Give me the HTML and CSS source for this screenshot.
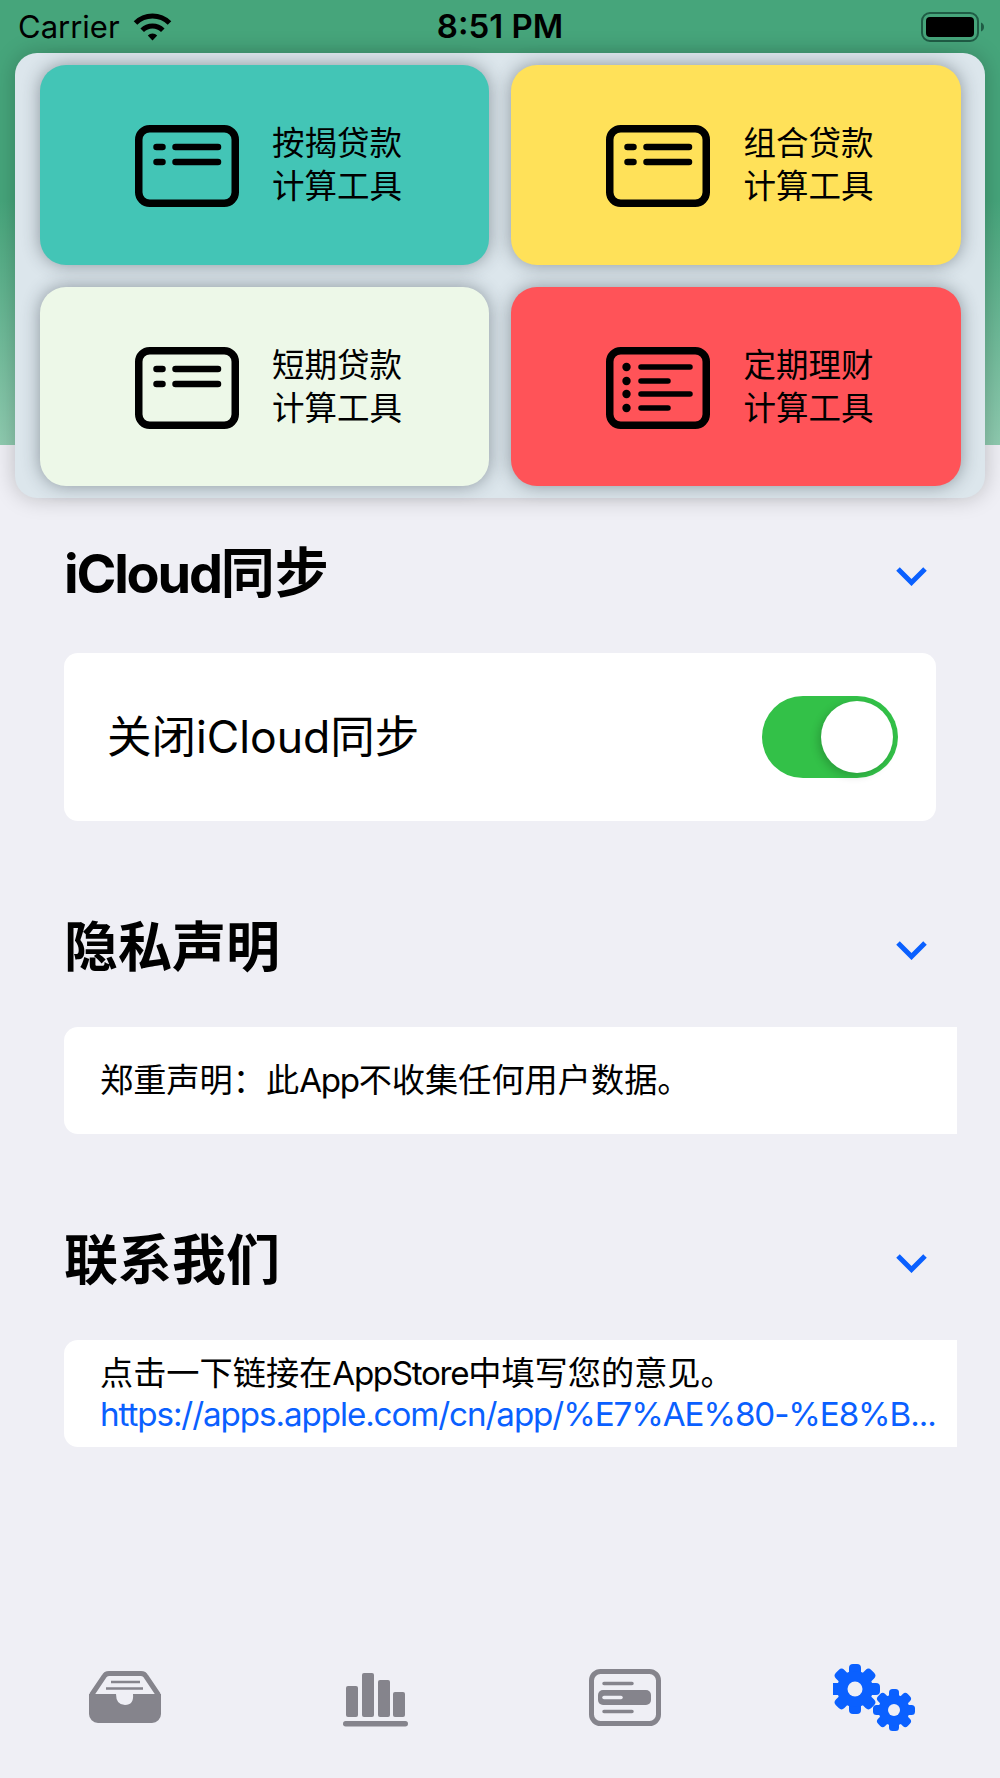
FILE: index.html
```html
<!DOCTYPE html>
<html lang="zh">
<head>
<meta charset="utf-8">
<title>Settings</title>
<link rel="stylesheet" href="styles.css">
</head>
<body>
<div class="page">
  <header class="hero">
    <div class="status">
      <div class="status-left">
        <span class="carrier">Carrier</span>
        <svg class="wifi" viewBox="0 0 39 28"><path d="M19.5 27.5 14.8 22.4a6.6 6.6 0 0 1 9.4 0Z" fill="#000"/><path d="M9.2 17.2a14.5 14.5 0 0 1 20.6 0" fill="none" stroke="#000" stroke-width="5"/><path d="M2.5 10a24 24 0 0 1 34 0" fill="none" stroke="#000" stroke-width="5"/></svg>
      </div>
      <span class="time">8:51 PM</span>
      <svg class="battery" viewBox="0 0 64 30"><rect x="1" y="1" width="56" height="28" rx="8" fill="none" stroke="#1f5c45" stroke-width="2"/><rect x="5" y="5" width="48" height="20" rx="4" fill="#000"/><path d="M60 10.5c2 .6 3 2.300 3 4.500s-1 3.900-3 4.500Z" fill="#1f5c45"/></svg>
    </div>
    <div class="panel">
      <a class="tile tile-teal">
        <svg class="tile-icon" viewBox="0 0 104 82"><rect x="3.750" y="3.750" width="96.500" height="74.500" rx="11" class="ic-frame"/><path d="M21.500 22h6M40.500 22h42.500M21.500 37h6M40.500 37h42.500" class="ic-line"/></svg>
        <span class="tile-text">按揭贷款<br>计算工具</span>
      </a>
      <a class="tile tile-yellow">
        <svg class="tile-icon" viewBox="0 0 104 82"><rect x="3.750" y="3.750" width="96.500" height="74.500" rx="11" class="ic-frame"/><path d="M21.500 22h6M40.500 22h42.500M21.500 37h6M40.500 37h42.500" class="ic-line"/></svg>
        <span class="tile-text">组合贷款<br>计算工具</span>
      </a>
      <a class="tile tile-pale">
        <svg class="tile-icon" viewBox="0 0 104 82"><rect x="3.750" y="3.750" width="96.500" height="74.500" rx="11" class="ic-frame"/><path d="M21.500 22h6M40.500 22h42.500M21.500 37h6M40.500 37h42.500" class="ic-line"/></svg>
        <span class="tile-text">短期贷款<br>计算工具</span>
      </a>
      <a class="tile tile-red">
        <svg class="tile-icon" viewBox="0 0 104 82"><rect x="3.750" y="3.750" width="96.500" height="74.500" rx="11" class="ic-frame"/><path d="M35 20h49M35 34h27M35 47h49M35 61h27" class="ic-line ic-line-thin"/><circle cx="20.500" cy="20" r="4.200"/><circle cx="20.500" cy="34" r="4.200"/><circle cx="20.500" cy="47" r="4.200"/><circle cx="20.500" cy="61" r="4.200"/></svg>
        <span class="tile-text">定期理财<br>计算工具</span>
      </a>
    </div>
  </header>

  <main class="sections">
    <section class="section">
      <div class="section-head">
        <h2 class="section-title"><span class="latin-tight">iCloud</span>同步</h2>
        <svg class="chevron" viewBox="0 0 33 20"><path d="M3 3l13.500 13.500L30 3"/></svg>
      </div>
      <div class="card card-row">
        <span class="row-label">关闭iCloud同步</span>
        <div class="switch"><span class="thumb"></span></div>
      </div>
    </section>

    <section class="section">
      <div class="section-head">
        <h2 class="section-title">隐私声明</h2>
        <svg class="chevron" viewBox="0 0 33 20"><path d="M3 3l13.500 13.500L30 3"/></svg>
      </div>
      <div class="card card-wide card-note">
        <p class="note">郑重声明：此<span class="latin">App</span>不收集任何用户数据。</p>
      </div>
    </section>

    <section class="section">
      <div class="section-head">
        <h2 class="section-title">联系我们</h2>
        <svg class="chevron" viewBox="0 0 33 20"><path d="M3 3l13.500 13.500L30 3"/></svg>
      </div>
      <div class="card card-wide card-note">
        <p class="note">点击一下链接在<span class="latin">AppStore</span>中填写您的意见。<br><span class="link">https://apps.apple.com/cn/app/%E7%AE%80-%E8%B...</span></p>
      </div>
    </section>
  </main>

  <nav class="tabbar">
    <div class="tab">
      <svg class="tab-icon" width="72" height="52" viewBox="0 0 72 52"><path d="M2.500 24 15 5.500Q16.500 2.500 20 2.500h32q3.500 0 5 3L69.500 24" fill="none" stroke="#85848c" stroke-width="5"/><path d="M0 23h27q0 11 9 11t8-11h28v20a9 9 0 0 1-9 9H9a9 9 0 0 1-9-9Z" fill="#85848c"/><path d="M22 11h29M17 17.500h37" stroke="#85848c" stroke-width="2.500"/></svg>
    </div>
    <div class="tab">
      <svg class="tab-icon tab-icon-chart" width="65" height="54" viewBox="0 0 65 54" fill="#85848c"><rect x="3" y="13" width="12" height="31" rx="2"/><rect x="19" y="0" width="12" height="44" rx="2"/><rect x="35" y="7" width="12" height="37" rx="2"/><rect x="50" y="19" width="12" height="25" rx="2"/><rect x="0" y="48" width="65" height="5.500" rx="2.700"/></svg>
    </div>
    <div class="tab">
      <svg class="tab-icon" width="72" height="57" viewBox="0 0 72 57"><rect x="2.500" y="2.500" width="67" height="52" rx="9" fill="none" stroke="#85848c" stroke-width="5"/><path d="M15 14.500h28M15 42.500h28" stroke="#85848c" stroke-width="3.500" stroke-linecap="round"/><rect x="9" y="21" width="53" height="15" rx="5" fill="#85848c"/><path d="M15 28.500h17" stroke="#efeff5" stroke-width="3.500" stroke-linecap="round"/></svg>
    </div>
    <div class="tab">
      <svg class="tab-icon" width="84" height="67" viewBox="2 0 84 67" fill="#0a60ff">
        <g transform="translate(24 25)">
          <rect x="-6" y="-25" width="12" height="50" rx="4"/>
          <rect x="-6" y="-25" width="12" height="50" rx="4" transform="rotate(45)"/>
          <rect x="-6" y="-25" width="12" height="50" rx="4" transform="rotate(90)"/>
          <rect x="-6" y="-25" width="12" height="50" rx="4" transform="rotate(135)"/>
          <circle r="18"/>
          <circle r="7.500" fill="#efeff5"/>
        </g>
        <g transform="translate(63 46)">
          <rect x="-5" y="-21" width="10" height="42" rx="3.500"/>
          <rect x="-5" y="-21" width="10" height="42" rx="3.500" transform="rotate(45)"/>
          <rect x="-5" y="-21" width="10" height="42" rx="3.500" transform="rotate(90)"/>
          <rect x="-5" y="-21" width="10" height="42" rx="3.500" transform="rotate(135)"/>
          <circle r="15.500"/>
          <circle r="6" fill="#efeff5"/>
        </g>
      </svg>
    </div>
  </nav>
</div>
</body>
</html>
```

FILE: styles.css
```css
* { box-sizing: border-box; }
html, body { margin: 0; padding: 0; }
body {
  background: #efeff5;
  color: #000;
  font-family: Inter, "Noto Sans CJK SC", sans-serif;
}
.page {
  width: 1000px;
  height: 1778px;
  display: flex;
  flex-direction: column;
  overflow: hidden;
}

/* Top */
.hero {
  height: 445px;
  background: linear-gradient(180deg, #46a57b 0%, #46a57b 45%, #8fcbb0 100%);
  flex: none;
}
.status {
  height: 53px;
  padding: 0 15px 0 18px;
  display: grid;
  grid-template-columns: 1fr auto 1fr;
  align-items: center;
}
.status-left { display: flex; align-items: center; gap: 13px; }
.carrier { font-size: 31px; line-height: 1; }
.wifi { width: 39px; height: 28px; }
.time { font-size: 33px; font-weight: 600; line-height: 1; margin-right: 3px; }
.battery { width: 64px; height: 30px; justify-self: end; }

.panel {
  margin: 0 15px;
  width: 970px;
  height: 445px;
  padding: 12px 24px 12px 25px;
  border-radius: 22px;
  background: #dce6ec;
  box-shadow: 0 0 22px rgba(0, 0, 0, .22);
  display: grid;
  grid-template-columns: 449px 450px;
  grid-template-rows: 200px 199px;
  gap: 22px;
  position: relative;
}
.tile {
  border-radius: 26px;
  box-shadow: 0 0 18px rgba(40, 50, 60, .45);
  display: flex;
  align-items: center;
  justify-content: center;
  gap: 33px;
  padding: 0 0 0 8px;
}
.tile-teal { background: #43c5b6; }
.tile-yellow { background: #ffe159; }
.tile-pale { background: #edf8e8; }
.tile-red { background: #ff5358; }
.tile-icon { width: 104px; height: 82px; flex: none; margin-top: 2px; }
.ic-frame { fill: none; stroke: #000; stroke-width: 7.500; }
.ic-line { fill: none; stroke: #000; stroke-width: 6.500; stroke-linecap: round; }
.ic-line-thin { stroke-width: 5.500; }
.tile-text { font-size: 32.500px; line-height: 43px; white-space: nowrap; }

/* Sections */
.sections { padding: 87px 0 0 64px; flex: none; }
.section { width: 872px; margin-bottom: 85px; }
.section-head {
  height: 80px;
  margin-bottom: 41px;
  display: flex;
  align-items: center;
  justify-content: space-between;
  padding: 0 8px 0 0;
}
.section-title { margin: 4px 0 0; font-size: 54px; font-weight: 700; line-height: 1; }
.latin-tight { letter-spacing: -2.200px; }
.latin { letter-spacing: -.04em; }
.chevron { width: 33px; height: 20px; flex: none; margin-top: 7px; }
.chevron path { fill: none; stroke: #0a60ff; stroke-width: 5; }
.card { background: #fff; border-radius: 14px; }
.card-row {
  height: 168px;
  padding: 0 38px 0 43px;
  display: flex;
  align-items: center;
  justify-content: space-between;
}
.row-label { font-size: 44.500px; line-height: 1; }
.switch {
  width: 136px;
  height: 82px;
  border-radius: 41px;
  background: #33c148;
  padding: 5px;
  display: flex;
  justify-content: flex-end;
}
.thumb {
  width: 72px;
  height: 72px;
  border-radius: 50%;
  background: #fff;
  box-shadow: -3px 3px 8px rgba(0, 0, 0, .18);
}
.card-wide {
  width: 893px;
  height: 107px;
  border-radius: 14px 0 0 14px;
  padding: 0 0 0 36px;
  display: flex;
  align-items: center;
}
.note { margin: 0; font-size: 33.200px; line-height: 41px; white-space: nowrap; }
.link { color: #0a60ff; letter-spacing: -.033em; }

/* Tabs */
.tabbar {
  margin-top: auto;
  margin-bottom: 31px;
  height: 100px;
  display: grid;
  grid-template-columns: repeat(4, 1fr);
  flex: none;
}
.tab { display: flex; align-items: center; justify-content: center; }
.tab-icon-chart { margin-top: 6px; }
```
